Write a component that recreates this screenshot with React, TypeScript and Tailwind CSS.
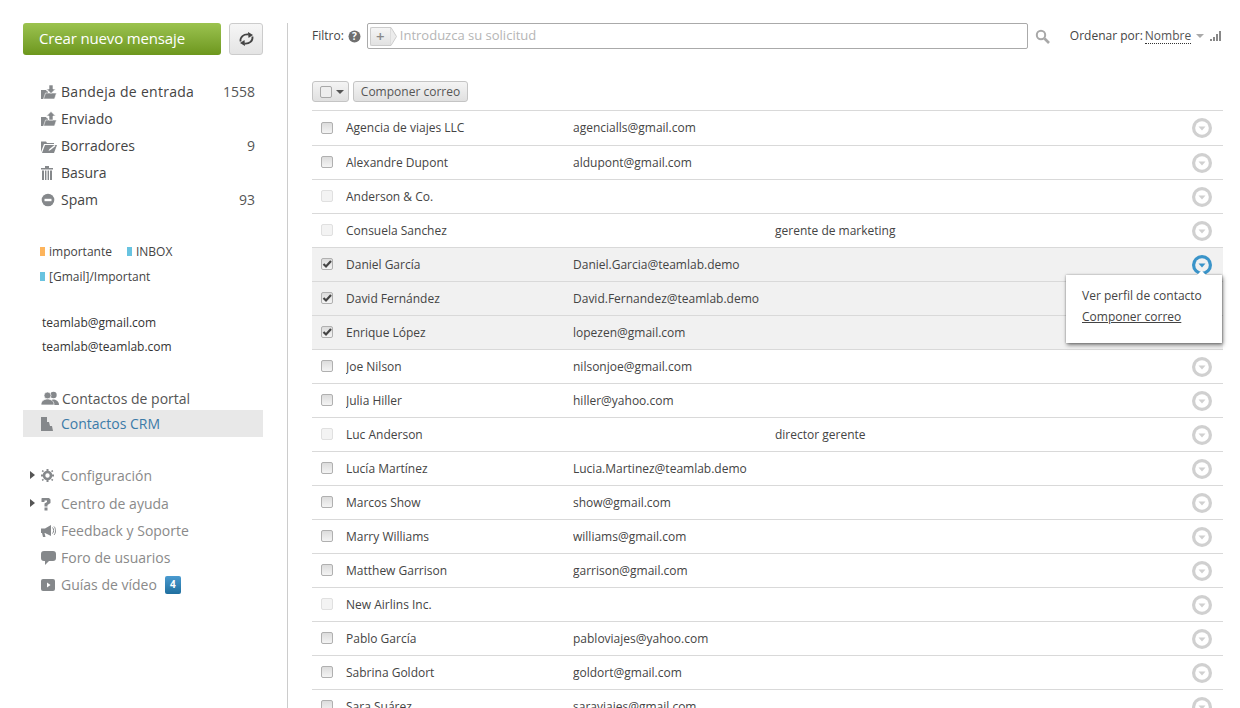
import * as React from "react";

const font = { fontFamily: '"Open Sans", sans-serif' };

type Contact = {
  name: string;
  email?: string;
  title?: string;
  checked?: boolean;
};

const contacts: Contact[] = [
  { name: "Agencia de viajes LLC", email: "agencialls@gmail.com" },
  { name: "Alexandre Dupont", email: "aldupont@gmail.com" },
  { name: "Anderson & Co." },
  { name: "Consuela Sanchez", title: "gerente de marketing" },
  { name: "Daniel García", email: "Daniel.Garcia@teamlab.demo", checked: true },
  { name: "David Fernández", email: "David.Fernandez@teamlab.demo", checked: true },
  { name: "Enrique López", email: "lopezen@gmail.com", checked: true },
  { name: "Joe Nilson", email: "nilsonjoe@gmail.com" },
  { name: "Julia Hiller", email: "hiller@yahoo.com" },
  { name: "Luc Anderson", title: "director gerente" },
  { name: "Lucía Martínez", email: "Lucia.Martinez@teamlab.demo" },
  { name: "Marcos Show", email: "show@gmail.com" },
  { name: "Marry Williams", email: "williams@gmail.com" },
  { name: "Matthew Garrison", email: "garrison@gmail.com" },
  { name: "New Airlins Inc." },
  { name: "Pablo García", email: "pabloviajes@yahoo.com" },
  { name: "Sabrina Goldort", email: "goldort@gmail.com" },
  { name: "Sara Suárez", email: "saraviajes@gmail.com" },
];

function Icon({ children, w = 16, h = 16 }: { children: React.ReactNode; w?: number; h?: number }) {
  return (
    <svg width={w} height={h} viewBox={`0 0 ${w} ${h}`} fill="#85888b" className="shrink-0">
      {children}
    </svg>
  );
}

const InboxIcon = () => (
  <Icon>
    <path d="M0 6h5l1 1.5h1V15H0z" />
    <path d="M2.5 15l2-6h11l-2 6z" stroke="#fff" strokeWidth=".6" />
    <path d="M8 1h4v4h2.5L10 9.5 5.5 5H8z" stroke="#fff" strokeWidth=".6" />
  </Icon>
);
const SentIcon = () => (
  <Icon>
    <path d="M0 6h5l1 1.5h1V15H0z" />
    <path d="M2.5 15l2-6h11l-2 6z" stroke="#fff" strokeWidth=".6" />
    <path d="M8 9V5H5.5L10 .5 14.5 5H12v4z" stroke="#fff" strokeWidth=".6" />
  </Icon>
);
const DraftIcon = () => (
  <Icon>
    <path d="M0 6V3.5h5l1 1.5h7v1H3L0 14z" />
    <path d="M1 15l3-8h12l-3 8z" />
    <path d="M7.5 13l1-2 5-4 1 1-5 4z" fill="#fff" />
  </Icon>
);
const TrashIcon = () => (
  <Icon w={12} h={14}>
    <path d="M0 2h12v1.4H0zM4 0h4v2H4z" />
    <path d="M1 4.5h2V14H1zM4 4.5h1.400V14H4zM6.600 4.5H8V14H6.600zM9 4.5h2V14H9z" />
  </Icon>
);
const SpamIcon = () => (
  <Icon w={14} h={14}>
    <circle cx="7" cy="7" r="6.3" />
    <rect x="3.5" y="5.8" width="7" height="2.4" fill="#fff" />
  </Icon>
);
const PeopleIcon = () => (
  <Icon w={18} h={14}>
    <circle cx="12.5" cy="4" r="3.2" />
    <path d="M9 14c0-4 1.500-5.500 3.500-5.500s5.500 1.500 5.500 5.500z" />
    <circle cx="6.5" cy="4.5" r="3.5" stroke="#fff" strokeWidth=".7" />
    <path d="M0 14c0-4 3-6 6.500-6s6.500 2 6.500 6z" stroke="#fff" strokeWidth=".7" />
  </Icon>
);
const CrmIcon = () => (
  <Icon w={12} h={14}>
    <path d="M0 0h6v5h2l1 4h2l1 5H0z" />
  </Icon>
);
const GearIcon = () => (
  <Icon w={13} h={13}>
    <circle cx="6.5" cy="6.5" r="3.5" fill="none" stroke="#85888b" strokeWidth="2.6" />
    <path d="M5.500 0h2v2h-2zM5.500 11h2v2h-2zM0 5.500h2v2H0zM11 5.500h2v2h-2zM1.500 1l1.500 1-1 1.300L.7 2.200zM11.500 1l.8 1.200-1.300 1.100-1-1.300zM2 9.700l1 1.300-1.500 1-.8-1.200zM11 9.700l1.300 1.100-.8 1.200L10 11z" />
  </Icon>
);
const QuestionIcon = () => (
  <Icon w={10} h={14}>
    <path d="M1 1h7l1.500 1.500v3.500L6.500 8v1.500h-3V6.500L6 5V3.500H3.500V5h-3V1.500z" />
    <rect x="3.5" y="10.5" width="3" height="3" />
  </Icon>
);
const MegaphoneIcon = () => (
  <Icon w={15} h={14}>
    <path d="M0 4.500h4L10 1v11L4 9H3.500l1 4H2L1 9H0z" />
    <path d="M11.500 3.500c1.500 1.500 1.500 4.500 0 6M13 2.500c2 2 2 6.500 0 8.500" fill="none" stroke="#85888b" />
  </Icon>
);
const BubbleIcon = () => (
  <Icon w={15} h={15}>
    <path d="M3 1h9a3 3 0 0 1 3 3v4a3 3 0 0 1-3 3H8l-4 4v-4H3a3 3 0 0 1-3-3V4a3 3 0 0 1 3-3z" />
  </Icon>
);
const VideoIcon = () => (
  <Icon w={14} h={12}>
    <rect width="14" height="12" rx="2" />
    <path d="M6 3.500l3.500 2.500L6 8.500z" fill="#fff" />
  </Icon>
);

function RowMenuIcon({ active }: { active?: boolean }) {
  const color = active ? "#3a94c9" : "#d0d0d0";
  return (
    <svg width="20" height="20" viewBox="0 0 20 20" className="shrink-0">
      <circle cx="10" cy="10" r="10" fill={color} />
      <circle cx="10" cy="10" r="6.8" fill={active ? "#f1f1f1" : "#fff"} />
      <path d="M6.500 8.500h7L10 12.500z" fill={color} />
    </svg>
  );
}

function Checkbox({ checked, disabled }: { checked?: boolean; disabled?: boolean }) {
  return (
    <span
      className={
        "relative mb-px block h-3 w-3 shrink-0 rounded-[2px] border " +
        (disabled
          ? "border-[#e0e0e0] bg-[#f3f3f3]"
          : "border-[#b0b0b0] bg-gradient-to-b from-[#dcdcdc] to-[#f4f4f4]")
      }
    >
      {checked && (
        <svg width="12" height="12" viewBox="0 0 12 12" className="absolute left-[-1px] top-[-1px]">
          <path d="M2.500 6l2.500 2.500L10 3" fill="none" stroke="#444" strokeWidth="2.2" />
        </svg>
      )}
    </span>
  );
}

function NavRow({
  icon,
  label,
  count,
  muted,
  className = "",
}: {
  icon: React.ReactNode;
  label: React.ReactNode;
  count?: string;
  muted?: boolean;
  className?: string;
}) {
  return (
    <div className={"flex h-[27px] items-center pl-[18px] pr-2 text-[14px] " + className}>
      <span className="flex w-5 justify-start">{icon}</span>
      <span className={"flex-1 " + (muted ? "text-[#8a8a8a]" : "text-[#444]")}>{label}</span>
      {count && <span className="text-[#555]">{count}</span>}
    </div>
  );
}

function Arrow() {
  return (
    <span className="absolute left-[7px] top-[9px] h-0 w-0 border-y-4 border-l-[5px] border-y-transparent border-l-[#555]" />
  );
}

function Sidebar() {
  return (
    <aside className="w-[287px] shrink-0 pl-[23px] pt-[23px]">
      <div className="flex gap-2">
        <button className="h-8 w-[198px] rounded-[3px] bg-gradient-to-b from-[#9cc34f] to-[#6d971c] pb-[2px] pl-4 text-left text-[15px] tracking-[-0.15px] text-white">
          Crear nuevo mensaje
        </button>
        <button className="flex h-8 w-[34px] items-center justify-center rounded-[3px] border border-[#ccc] bg-gradient-to-b from-[#f6f6f6] to-[#e4e4e4]">
          <svg width="15" height="14" viewBox="0 0 15 14" fill="none" stroke="#444" strokeWidth="1.8">
            <path d="M1.500 9.500C1 5 4.500 2 9.500 2.500" />
            <path d="M13.500 4.500C14 9 10.500 12 5.500 11.500" />
            <path d="M9 0l5 3-4.500 3z" fill="#444" stroke="none" />
            <path d="M6 14l-5-3 4.500-3z" fill="#444" stroke="none" />
          </svg>
        </button>
      </div>

      <nav className="mt-[23px] w-[240px]">
        <NavRow icon={<InboxIcon />} label={<span className="tracking-[0.28px]">Bandeja de entrada</span>} count="1558" />
        <NavRow icon={<SentIcon />} label="Enviado" />
        <NavRow icon={<DraftIcon />} label="Borradores" count="9" />
        <NavRow icon={<TrashIcon />} label="Basura" />
        <NavRow icon={<SpamIcon />} label="Spam" count="93" />
      </nav>

      <div className="mt-[26px] pl-[17px] text-[12px] text-[#444]">
        <div className="flex h-[25px] items-center">
          <span className="mr-1 h-[9px] w-[5px] bg-[#fdb45c]" />
          importante
          <span className="ml-[15px] mr-1 h-[9px] w-[5px] bg-[#68c3e0]" />
          INBOX
        </div>
        <div className="flex h-[25px] items-center">
          <span className="mr-1 h-[9px] w-[5px] bg-[#68c3e0]" />
          [Gmail]/Important
        </div>
      </div>

      <div className="mt-[22px] pl-[19px] text-[12px] text-[#333]">
        <div className="flex h-6 items-center">teamlab@gmail.com</div>
        <div className="flex h-6 items-center">teamlab@teamlab.com</div>
      </div>

      <div className="mt-6 w-[240px]">
        <NavRow className="pt-[3px]" icon={<PeopleIcon />} label={<span className="ml-px text-[#555]">Contactos de portal</span>} />
        <div className="bg-[#e8e8e8]">
          <NavRow icon={<CrmIcon />} label={<span className="text-[#3b7ba8]">Contactos CRM</span>} />
        </div>
      </div>

      <div className="mt-[25px] w-[240px]">
        <div className="relative">
          <Arrow />
          <NavRow muted icon={<GearIcon />} label="Configuración" />
        </div>
        <div className="relative mt-px">
          <Arrow />
          <NavRow muted icon={<QuestionIcon />} label="Centro de ayuda" />
        </div>
        <NavRow muted icon={<MegaphoneIcon />} label="Feedback y Soporte" />
        <NavRow muted icon={<BubbleIcon />} label="Foro de usuarios" />
        <NavRow
          muted
          icon={<VideoIcon />}
          label={
            <span className="flex items-center">
              Guías de vídeo
              <span className="ml-2 flex h-[18px] w-4 items-center justify-center rounded-[2px] bg-gradient-to-b from-[#4a9bd0] to-[#1f6f9f] text-[10px] font-bold text-white">
                4
              </span>
            </span>
          }
        />
      </div>
    </aside>
  );
}

function FilterBar() {
  return (
    <div className="flex h-[26px] items-center text-[12px] text-[#444]">
      <span>Filtro:</span>
      <svg width="13" height="13" viewBox="0 0 13 13" className="ml-1">
        <circle cx="6.5" cy="6.5" r="6" fill="#6f6f6f" />
        <text x="6.5" y="10" textAnchor="middle" fontSize="10" fontWeight="700" fill="#fff">
          ?
        </text>
      </svg>
      <div className="ml-[6px] flex h-[26px] w-[661px] items-center rounded-[2px] border border-[#aaa] pl-[2px]">
        <span className="flex h-[19px] w-5 items-center justify-center rounded-l-[2px] border border-r-0 border-[#ccc] bg-gradient-to-b from-[#f5f5f5] to-[#e2e2e2] text-[15px] font-semibold leading-none text-[#888]">
          +
        </span>
        <svg width="7" height="19" viewBox="0 0 7 19" className="shrink-0">
          <path d="M0 .5h1L6.500 9.500 1 18.500H0z" fill="#ececec" stroke="#ccc" />
        </svg>
        <span className="ml-[3px] text-[13px] text-[#b5b5b5]">Introduzca su solicitud</span>
      </div>
      <svg width="15" height="15" viewBox="0 0 15 15" fill="none" className="ml-[7px]" stroke="#a8a8a8">
        <circle cx="6" cy="6" r="4.2" strokeWidth="2" />
        <path d="M9.500 9.500L14 14" strokeWidth="2.6" />
      </svg>
      <span className="ml-[20px] whitespace-nowrap">Ordenar por:</span>
      <span className="ml-[2px] border-b border-dotted border-[#333] leading-[15px] text-[#555]">Nombre</span>
      <span className="ml-[5px] h-0 w-0 border-x-4 border-t-[4px] border-x-transparent border-t-[#aaa]" />
      <svg width="12" height="10" viewBox="0 0 12 10" className="ml-[6px]" fill="#888">
        <path d="M0 8h2v2H0zM3 6h2v4H3zM6 3h2v7H6zM9 0h2v10H9z" />
      </svg>
    </div>
  );
}

function ContactRow({ contact, active, first }: { contact: Contact; active?: boolean; first?: boolean }) {
  const disabled = !contact.email;
  return (
    <div
      className={
        "flex items-center border-b border-[#d9d9d9] pl-[9px] pr-[11px] text-[12px] text-[#444] " +
        (first ? "h-[35px] " : "h-[34px] ") +
        (contact.checked ? "bg-[#f1f1f1]" : "")
      }
    >
      <Checkbox checked={contact.checked} disabled={disabled} />
      <span className="ml-[13px] w-[227px] shrink-0 truncate">{contact.name}</span>
      <span className="w-[202px] shrink-0 truncate">{contact.email}</span>
      <span className="flex-1">{contact.title}</span>
      <RowMenuIcon active={active} />
    </div>
  );
}

export default function App() {
  return (
    <div className="flex h-[708px] w-[1240px] overflow-hidden bg-white" style={font}>
      <Sidebar />
      <main className="mt-[23px] flex-1 border-l border-[#ccc] pl-6 pr-[17px]">
        <FilterBar />
        <div className="mt-8 flex h-[21px] gap-1">
          <div className="flex w-[37px] items-center rounded-[3px] border border-[#c4c4c4] bg-gradient-to-b from-[#f4f4f4] to-[#e0e0e0] pl-[7px]">
            <span className="h-3 w-3 rounded-[2px] border border-[#a8a8a8] bg-[#eee]" />
            <span className="ml-1 h-0 w-0 border-x-4 border-t-[4px] border-x-transparent border-t-[#555]" />
          </div>
          <button className="w-[115px] rounded-[3px] border border-[#c4c4c4] bg-gradient-to-b from-[#f4f4f4] to-[#e0e0e0] text-[12px] text-[#555]">
            Componer correo
          </button>
        </div>
        <div className="relative mt-2 border-t border-[#d9d9d9]">
          {contacts.map((c, i) => (
            <ContactRow key={c.name} contact={c} active={i === 4} first={i === 0} />
          ))}
          <div className="absolute left-[754px] top-[164px] w-[156px] bg-white px-4 pb-4 pt-[10px] text-[12px] text-[#444] shadow-[1px_2px_4px_rgba(0,0,0,0.5),0_0_2px_rgba(0,0,0,0.3)]">
            <span className="absolute left-[132px] top-[-3px] h-[7px] w-[7px] rotate-45 bg-white" />
            <div className="relative leading-[21px]">Ver perfil de contacto</div>
            <div className="relative leading-[21px] underline">Componer correo</div>
          </div>
        </div>
      </main>
    </div>
  );
}
